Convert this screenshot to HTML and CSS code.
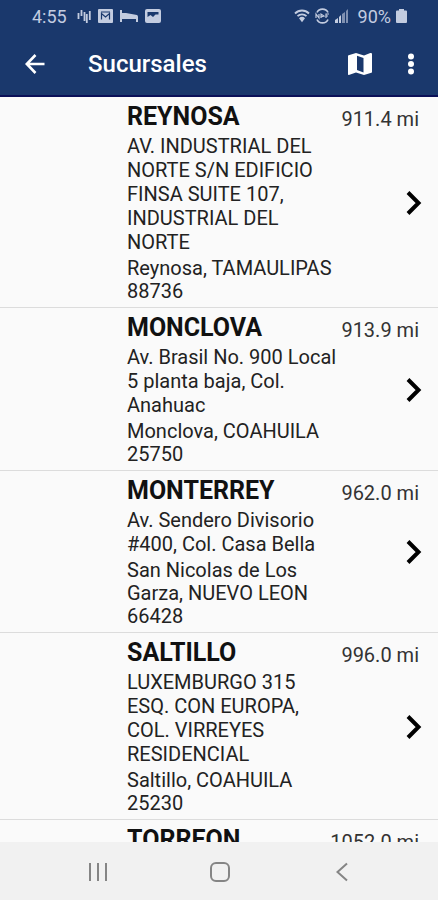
FILE: index.html
```
<!DOCTYPE html>
<html lang="es">
<head>
    <meta charset="UTF-8">
    <meta name="viewport" content="width=device-width, initial-scale=1.0">
    <title>Sucursales</title>
    <link rel="stylesheet" href="styles.css">
</head>
<body>
    <header class="header">
        <div class="status">
            <span>4:55</span>
            <div class="status-icons">
                <svg width="14" height="16" viewBox="0 0 14 16" fill="none" stroke="currentColor" stroke-width="1.800"><path d="M1.500 5v6M4.500 2v6M7.500 4v9M9.800 6v9M12.800 3v9"/></svg>
                <svg width="15" height="14" viewBox="0 0 15 14"><rect width="15" height="14" rx="1" fill="currentColor"/><path d="M3.500 10.500V4.500l4 3.500 4-3.500v6M3 3h9" fill="none" stroke="#1a386c" stroke-width="1.200"/></svg>
                <svg width="18" height="14" viewBox="0 0 18 14" fill="currentColor"><path d="M0 1h2v3h4l11 2q1 .5 1 2v5h-2v-3H2v3H0z"/></svg>
                <svg width="16" height="14" viewBox="0 0 16 14"><rect width="16" height="14" rx="2" fill="currentColor"/><path d="M2.500 8V3h11v2.500h-3L8 8 5.500 6z" fill="#1a386c"/></svg>
            </div>
            <div class="status-icons status-right">
                <svg width="16" height="14" viewBox="0 0 16 14" fill="none" stroke="currentColor" stroke-width="1.800"><path d="M1 4.500c4-4 10-4 14 0M3.500 7.200c2.500-2.500 6.500-2.500 9 0"/><path d="M5 9.200c2-1.800 4-1.800 6 0l-3 4z" fill="currentColor" stroke="none"/></svg>
                <svg width="15" height="16" viewBox="0 0 15 16" fill="none" stroke="currentColor" stroke-width="1.700"><path d="M2 4.500c2-4.500 9-4.500 11 0M2 11.500c2 4.500 9 4.500 11 0"/><path d="M1 10V6l3 4V6M6 10V6l3 2-3 1M11 10V6h3M11 8h2" stroke-width="1.200"/></svg>
                <svg width="14" height="14" viewBox="0 0 14 14" fill="currentColor"><path d="M0 14v-3l3-2v5zM4 14V8l2-2v8z"/><path d="M7 14V5l3-2v11zM11 14V2l2-2v14z" opacity=".6"/></svg>
                <span class="battery">90%</span>
                <svg width="11" height="14" viewBox="0 0 11 14" fill="currentColor"><path d="M3 0h5v1.500h2q1 0 1 1V13q0 1-1 1H1q-1 0-1-1V2.500q0-1 1-1h2z"/></svg>
            </div>
        </div>
        <div class="toolbar">
            <button class="icon-btn" aria-label="Regresar">
                <svg width="20" height="20" viewBox="0 0 20 20" fill="none" stroke="currentColor" stroke-width="2.600"><path d="M19.500 10H2M10.500 1L1.800 10l8.700 9"/></svg>
            </button>
            <h1 class="title">Sucursales</h1>
            <button class="icon-btn map-btn" aria-label="Mapa">
                <svg width="24" height="24" viewBox="0 0 24 24" fill="currentColor"><path d="M23 1l-.7.1L16 3.500 8 1 .6 3.300Q0 3.500 0 4v18.200q0 .8.800.700L8 20.500l8 2.500 7.400-2.300q.6-.2.6-.7V1.800Q23.800 1 23 1zM15.500 20.500L9 18V3.800L15.500 6z"/></svg>
            </button>
            <button class="icon-btn" aria-label="Menú">
                <svg width="8" height="22" viewBox="0 0 8 22" fill="currentColor"><circle cx="4" cy="3.500" r="3"/><circle cx="4" cy="11" r="3"/><circle cx="4" cy="18.500" r="3"/></svg>
            </button>
        </div>
    </header>

    <main class="list">
        <a class="branch" href="#reynosa">
            <h2 class="name">REYNOSA</h2>
            <span class="distance">911.4 mi</span>
            <p class="address">AV. INDUSTRIAL DEL NORTE S/N EDIFICIO FINSA SUITE 107, INDUSTRIAL DEL NORTE</p>
            <p class="city">Reynosa, TAMAULIPAS 88736</p>
            <svg class="chevron" width="16" height="24" viewBox="0 0 16 24"><path d="M2 1.500L12.500 12 2 22.500"/></svg>
        </a>
        <a class="branch" href="#monclova">
            <h2 class="name">MONCLOVA</h2>
            <span class="distance">913.9 mi</span>
            <p class="address">Av. Brasil No. 900 Local 5 planta baja, Col. Anahuac</p>
            <p class="city">Monclova, COAHUILA 25750</p>
            <svg class="chevron" width="16" height="24" viewBox="0 0 16 24"><path d="M2 1.500L12.500 12 2 22.500"/></svg>
        </a>
        <a class="branch" href="#monterrey">
            <h2 class="name">MONTERREY</h2>
            <span class="distance">962.0 mi</span>
            <p class="address">Av. Sendero Divisorio #400, Col. Casa Bella</p>
            <p class="city">San Nicolas de Los Garza, NUEVO LEON 66428</p>
            <svg class="chevron" width="16" height="24" viewBox="0 0 16 24"><path d="M2 1.500L12.500 12 2 22.500"/></svg>
        </a>
        <a class="branch" href="#saltillo">
            <h2 class="name">SALTILLO</h2>
            <span class="distance">996.0 mi</span>
            <p class="address">LUXEMBURGO 315 ESQ. CON EUROPA, COL. VIRREYES RESIDENCIAL</p>
            <p class="city">Saltillo, COAHUILA 25230</p>
            <svg class="chevron" width="16" height="24" viewBox="0 0 16 24"><path d="M2 1.500L12.500 12 2 22.500"/></svg>
        </a>
        <a class="branch" href="#torreon">
            <h2 class="name">TORREON</h2>
            <span class="distance">1052.0 mi</span>
        </a>
    </main>

    <nav class="navbar">
        <button class="nav-btn" aria-label="Recientes">
            <svg width="20" height="20" viewBox="0 0 20 20"><path d="M2 1v18M10 1v18M18 1v18"/></svg>
        </button>
        <button class="nav-btn" aria-label="Inicio">
            <svg width="20" height="20" viewBox="0 0 20 20"><rect x="1" y="1" width="18" height="18" rx="5"/></svg>
        </button>
        <button class="nav-btn" aria-label="Atrás">
            <svg width="20" height="20" viewBox="0 0 20 20"><path d="M15 1.500L5.500 10l9.500 8.500"/></svg>
        </button>
    </nav>
</body>
</html>
```
FILE: styles.css
```
* {
    box-sizing: border-box;
}
body {
    display: flex;
    flex-direction: column;
    height: 100vh;
    margin: 0;
    background-color: #fafafa;
    color: #111;
    font-family: Roboto, sans-serif;
    font-size: 20px;
}
button {
    padding: 0;
    border: none;
    background: none;
    color: inherit;
    cursor: pointer;
}
svg {
    display: block;
}
.header {
    background-color: #1a386c;
    border-bottom: 2px solid #0b1058;
    color: #fff;
}
.status {
    display: flex;
    align-items: center;
    gap: 10px;
    height: 32px;
    padding: 0 31px 0 32px;
    color: #c3cce0;
    font-size: 18px;
}
.status-icons {
    display: flex;
    align-items: center;
    gap: 7px;
}
.status-right {
    margin-left: auto;
    gap: 5px;
}
.battery {
    margin-left: 4px;
}
.toolbar {
    display: flex;
    align-items: center;
    height: 63px;
    padding: 0 8px 0 16px;
}
.icon-btn {
    display: flex;
    align-items: center;
    justify-content: center;
    width: 38px;
    height: 48px;
}
.map-btn {
    width: 64px;
}
.title {
    flex: 1;
    margin: 0;
    padding-left: 34px;
    font-size: 24px;
    font-weight: 500;
}
.list {
    flex: 1;
    min-height: 0;
    overflow-y: auto;
    scrollbar-width: none;
}
.branch {
    display: grid;
    grid-template-columns: 1fr 80px;
    padding: 5px 16px 4px 127px;
    border-bottom: 1px solid #dcdcdc;
    color: inherit;
    text-decoration: none;
}
.name {
    margin: 0 0 3px;
    font-size: 25px;
    font-weight: 700;
    line-height: 29px;
}
.distance {
    grid-area: 1 / 2;
    justify-self: end;
    padding: 5px 3px 0 0;
    color: #333;
    line-height: 24px;
    white-space: nowrap;
}
.address,
.city {
    grid-column: 1;
    margin: 0;
    color: #222;
    line-height: 24px;
}
.city {
    padding-top: 3px;
    line-height: 23px;
}
.chevron {
    grid-area: 1 / 2 / 4 / 3;
    align-self: center;
    justify-self: end;
    fill: none;
    stroke: #000;
    stroke-width: 4;
}
.navbar {
    display: flex;
    align-items: center;
    justify-content: center;
    height: 58px;
    padding: 2px 0 0 2px;
    background-color: #f1f1f1;
}
.nav-btn {
    display: flex;
    justify-content: center;
    width: 28%;
    padding: 14px 0;
}
.nav-btn svg {
    fill: none;
    stroke: #858585;
    stroke-width: 2;
}
```
